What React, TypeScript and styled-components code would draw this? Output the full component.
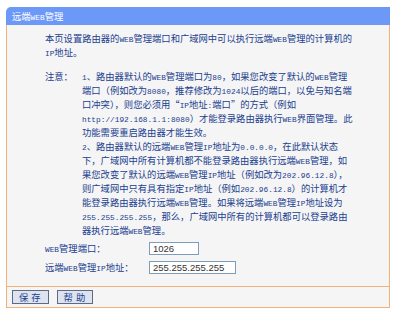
import React from "react";
import styled, { createGlobalStyle } from "styled-components";

const GlobalStyle = createGlobalStyle`
  html, body {
    margin: 0;
    padding: 0;
    background: #ffffff;
  }
  body {
    font-family: "Noto Sans CJK SC", "DejaVu Sans", sans-serif;
  }
`;

const ORANGE = "#f0b276";
const INK = "#21408f";

const Panel = styled.section`
  width: 384px;
  margin: 7px 0 0 6px;
  box-sizing: border-box;
`;

const Header = styled.div`
  height: 18px;
  background: #6c99f7;
  border-top-left-radius: 5px;
  color: #ffffff;
  font-size: 9.3px;
  line-height: 18px;
  padding-left: 6px;
  white-space: nowrap;
  overflow: hidden;
`;

const Body = styled.div`
  background: #f5f5f5;
  border-left: 1px solid ${ORANGE};
  border-right: 1px solid ${ORANGE};
  padding: 6px 0 12px 38px;
  color: ${INK};
  font-size: 9.3px;
  line-height: 14px;
`;

const Lines = styled.div`
  white-space: nowrap;
`;

const Line = styled.div`
  height: 14px;
  line-height: 14px;
  overflow: visible;
`;

const Notes = styled.div`
  display: flex;
  margin-top: 10px;
`;

const NoteLabel = styled.div`
  width: 37px;
  height: 14px;
  flex: none;
  white-space: nowrap;
`;

const Latin = styled.span`
  font-family: "Liberation Mono", "DejaVu Sans Mono", monospace;
  font-size: 7.8px;
  line-height: 1;
`;

const Form = styled.div`
  display: grid;
  grid-template-columns: 104px auto;
  row-gap: 6px;
  margin-top: 5px;
  align-items: center;
`;

const Label = styled.div`
  white-space: nowrap;
  height: 13px;
  line-height: 13px;
`;

const Field = styled.div<{ $w: number }>`
  width: ${(p) => p.$w}px;
  height: 13px;
  box-sizing: border-box;
  border: 1px solid #7f9db9;
  background: #ffffff;
  color: #333333;
  font-family: "Liberation Sans", Arial, sans-serif;
  font-size: 9.5px;
  line-height: 11px;
  padding-left: 3px;
`;

const Footer = styled.div`
  display: flex;
  gap: 8px;
  background: #f5f5f5;
  border: 1px solid ${ORANGE};
  padding: 3px 0 3px 5px;
`;

const Button = styled.button`
  height: 14px;
  padding: 0 4px;
  margin: 0;
  border: 1px solid #5c6a85;
  background: #dde4f0;
  color: ${INK};
  font-family: "Noto Sans CJK SC", sans-serif;
  font-size: 9.3px;
  line-height: 12px;
  letter-spacing: 3px;
  text-indent: 2px;
`;

const Txt = ({ s }: { s: string }) => (
  <>
    {s.split(/([\x20-\x7e]+)/).map((part, i) =>
      /[\x20-\x7e]/.test(part) ? <Latin key={i}>{part}</Latin> : part
    )}
  </>
);

const intro = [
  "本页设置路由器的WEB管理端口和广域网中可以执行远端WEB管理的计算机的",
  "IP地址。",
];

const notes = [
  "1、路由器默认的WEB管理端口为80，如果您改变了默认的WEB管理",
  "端口（例如改为8080，推荐修改为1024以后的端口，以免与知名端",
  "口冲突），则您必须用“IP地址:端口”的方式（例如",
  "http://192.168.1.1:8080）才能登录路由器执行WEB界面管理。此",
  "功能需要重启路由器才能生效。",
  "2、路由器默认的远端WEB管理IP地址为0.0.0.0，在此默认状态",
  "下，广域网中所有计算机都不能登录路由器执行远端WEB管理，如",
  "果您改变了默认的远端WEB管理IP地址（例如改为202.96.12.8），",
  "则广域网中只有具有指定IP地址（例如202.96.12.8）的计算机才",
  "能登录路由器执行远端WEB管理。如果将远端WEB管理IP地址设为",
  "255.255.255.255，那么，广域网中所有的计算机都可以登录路由",
  "器执行远端WEB管理。",
];

const App = () => {
  return (
    <>
      <GlobalStyle />
      <Panel>
        <Header>
          远端<Latin>WEB</Latin>管理
        </Header>
        <Body>
          <Lines>
            {intro.map((l) => (
              <Line key={l}>
                <Txt s={l} />
              </Line>
            ))}
          </Lines>
          <Notes>
            <NoteLabel>注意：</NoteLabel>
            <Lines>
              {notes.map((l) => (
                <Line key={l}>
                  <Txt s={l} />
                </Line>
              ))}
            </Lines>
          </Notes>
          <Form>
            <Label>
              <Txt s="WEB管理端口：" />
            </Label>
            <Field $w={50}>1026</Field>
            <Label>
              <Txt s="远端WEB管理IP地址：" />
            </Label>
            <Field $w={87}>255.255.255.255</Field>
          </Form>
        </Body>
        <Footer>
          <Button>保存</Button>
          <Button>帮助</Button>
        </Footer>
      </Panel>
    </>
  );
};

export default App;
